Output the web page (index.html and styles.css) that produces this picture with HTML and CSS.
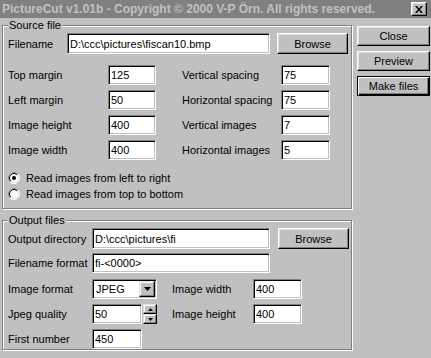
FILE: index.html
```html
<!DOCTYPE html>
<html lang="en">
<head>
    <meta charset="UTF-8">
    <title>PictureCut</title>
    <link rel="stylesheet" href="styles.css">
</head>
<body>
    <div class="titlebar">
        <span class="title">PictureCut v1.01b - Copyright © 2000 V-P Örn. All rights reserved.</span>
        <button class="title-close" aria-label="Close">
            <svg width="8" height="7" viewBox="0 0 8 7"><path d="M0 0h2l2 2.5L6 0h2L5 3.5 8 7H6L4 4.5 2 7H0l3-3.5z" fill="#000"/></svg>
        </button>
    </div>

    <div class="client">
        <div class="groups">
            <fieldset class="group source">
                <legend>Source file</legend>
                <div class="file-row">
                    <label class="lbl" for="filename">Filename</label>
                    <input class="field file-field" id="filename" type="text" value="D:\ccc\pictures\fiscan10.bmp">
                    <button class="btn browse">Browse</button>
                </div>
                <div class="pairs">
                    <label class="lbl">Top margin</label>
                    <input class="field num" type="text" value="125">
                    <label class="lbl second">Vertical spacing</label>
                    <input class="field num" type="text" value="75">

                    <label class="lbl">Left margin</label>
                    <input class="field num" type="text" value="50">
                    <label class="lbl second">Horizontal spacing</label>
                    <input class="field num" type="text" value="75">

                    <label class="lbl">Image height</label>
                    <input class="field num" type="text" value="400">
                    <label class="lbl second">Vertical images</label>
                    <input class="field num" type="text" value="7">

                    <label class="lbl">Image width</label>
                    <input class="field num" type="text" value="400">
                    <label class="lbl second">Horizontal images</label>
                    <input class="field num" type="text" value="5">
                </div>
                <div class="radios">
                    <div class="radio">
                        <svg width="12" height="12" viewBox="0 0 12 12">
                            <circle cx="6" cy="6" r="5.5" fill="#fff" stroke="#fff"/>
                            <path d="M2.1 9.9A5.5 5.5 0 0 1 9.9 2.1" fill="none" stroke="#808080"/>
                            <circle cx="6" cy="6" r="4.5" fill="none" stroke="#dfdfdf"/>
                            <path d="M2.8 9.2A4.5 4.5 0 0 1 9.2 2.8" fill="none" stroke="#000"/>
                            <circle cx="6" cy="6" r="2" fill="#000"/>
                        </svg>
                        <span>Read images from left to right</span>
                    </div>
                    <div class="radio">
                        <svg width="12" height="12" viewBox="0 0 12 12">
                            <circle cx="6" cy="6" r="5.5" fill="#fff" stroke="#fff"/>
                            <path d="M2.1 9.9A5.5 5.5 0 0 1 9.9 2.1" fill="none" stroke="#808080"/>
                            <circle cx="6" cy="6" r="4.5" fill="none" stroke="#dfdfdf"/>
                            <path d="M2.8 9.2A4.5 4.5 0 0 1 9.2 2.8" fill="none" stroke="#000"/>
                        </svg>
                        <span>Read images from top to bottom</span>
                    </div>
                </div>
            </fieldset>

            <fieldset class="group output">
                <legend>Output files</legend>
                <div class="file-row">
                    <label class="lbl" for="outdir">Output directory</label>
                    <input class="field out-field" id="outdir" type="text" value="D:\ccc\pictures\fi">
                    <button class="btn browse">Browse</button>
                </div>
                <div class="format-row">
                    <label class="lbl" for="fmt">Filename format</label>
                    <input class="field out-field" id="fmt" type="text" value="fi-<0000>">
                </div>
                <div class="out-pairs">
                    <label class="lbl">Image format</label>
                    <div class="select">
                        <span class="select-text">JPEG</span>
                        <span class="select-arrow">
                            <svg width="7" height="4" viewBox="0 0 7 4"><path d="M0 0h7L3.5 4z" fill="#000"/></svg>
                        </span>
                    </div>
                    <label class="lbl second">Image width</label>
                    <input class="field num" type="text" value="400">

                    <label class="lbl">Jpeg quality</label>
                    <div class="spin-wrap">
                        <input class="field num" type="text" value="50">
                        <div class="spin">
                            <span class="spin-btn"><svg width="5" height="3" viewBox="0 0 5 3"><path d="M2.5 0L5 3H0z" fill="#000"/></svg></span>
                            <span class="spin-btn"><svg width="5" height="3" viewBox="0 0 5 3"><path d="M0 0h5L2.5 3z" fill="#000"/></svg></span>
                        </div>
                    </div>
                    <label class="lbl second">Image height</label>
                    <input class="field num" type="text" value="400">

                    <label class="lbl">First number</label>
                    <input class="field num" type="text" value="450">
                </div>
            </fieldset>
        </div>

        <div class="buttons">
            <button class="btn side">Close</button>
            <button class="btn side">Preview</button>
            <button class="btn side default">Make files</button>
        </div>
    </div>
</body>
</html>
```

FILE: styles.css
```css
body {
    margin: 0;
    width: 431px;
    height: 358px;
    overflow: hidden;
    background: #c0c0c0;
    font-family: "Liberation Sans", Arial, sans-serif;
    font-size: 11px;
    color: #000;
}
.titlebar {
    height: 18px;
    background: #808080;
    display: flex;
    align-items: center;
    padding-left: 2px;
}
.title {
    font-weight: bold;
    font-size: 12px;
    color: #c0c0c0;
    white-space: nowrap;
}
.title-close {
    margin-left: auto;
    margin-right: 4px;
    width: 16px;
    height: 14px;
    padding: 0;
    display: flex;
    align-items: center;
    justify-content: center;
    background: #c0c0c0;
    border: 1px solid;
    border-color: #fff #000 #000 #fff;
    box-shadow: inset -1px -1px #808080, inset 1px 1px #dfdfdf;
}
.client {
    display: flex;
    padding-left: 2px;
}
.groups {
    width: 350px;
}
.group {
    box-sizing: border-box;
    width: 350px;
    margin: 1px 0 0;
    border: 1px solid #808080;
    box-shadow: inset 1px 1px #fff, 1px 1px #fff;
    padding: 2px 0 6px 5px;
    min-width: 0;
}
.group legend {
    padding: 0 1px;
    line-height: 12px;
    background: #c0c0c0;
}
.group.output {
    margin-top: 5px;
    padding-bottom: 0;
}
.lbl {
    white-space: nowrap;
    display: flex;
    align-items: center;
}
.field {
    box-sizing: border-box;
    height: 20px;
    margin: 0;
    padding: 0 0 0 2px;
    font-family: "Liberation Sans", Arial, sans-serif;
    font-size: 11px;
    color: #000;
    background: #fff;
    border: 1px solid;
    border-color: #808080 #fff #fff #808080;
    box-shadow: inset 1px 1px #000, inset -1px -1px #c0c0c0;
    outline: none;
}
.btn {
    box-sizing: border-box;
    height: 21px;
    padding: 0;
    font-family: "Liberation Sans", Arial, sans-serif;
    font-size: 11px;
    color: #000;
    background: #c0c0c0;
    border: 1px solid;
    border-color: #fff #000 #000 #fff;
    box-shadow: inset -1px -1px #808080, inset 1px 1px #dfdfdf;
}
.file-row {
    display: flex;
    align-items: center;
    height: 21px;
}
.file-row .lbl {
    width: 59px;
}
.file-row .field {
    height: 21px;
}
.file-field {
    width: 203px;
}
.file-row .browse {
    width: 71px;
    margin-left: 7px;
}
.pairs {
    display: grid;
    grid-template-columns: 100px 48px 125px 49px;
    grid-auto-rows: 20px;
    row-gap: 5px;
    margin-top: 11px;
}
.lbl.second {
    padding-left: 26px;
}
.radios {
    margin-top: 10px;
}
.radio {
    display: flex;
    align-items: center;
    gap: 6px;
    height: 16px;
}
.output .file-row .lbl,
.format-row .lbl {
    width: 84px;
}
.out-field {
    width: 178px;
}
.output .file-row .browse {
    margin-left: 8px;
}
.format-row {
    display: flex;
    height: 20px;
    margin-top: 4px;
}
.out-pairs {
    display: grid;
    grid-template-columns: 84px 65px 96px 49px;
    grid-auto-rows: 20px;
    row-gap: 5px;
    margin-top: 6px;
}
.out-pairs .lbl.second {
    padding-left: 15px;
}
.out-pairs .num {
    width: 50px;
}
.out-pairs .num:nth-child(4),
.out-pairs .num:nth-child(8) {
    width: 49px;
}
.select {
    box-sizing: border-box;
    display: flex;
    height: 20px;
    background: #fff;
    border: 1px solid;
    border-color: #808080 #fff #fff #808080;
    box-shadow: inset 1px 1px #000, inset -1px -1px #c0c0c0;
    padding: 1px;
}
.select-text {
    flex: 1;
    padding-left: 2px;
    display: flex;
    align-items: center;
}
.select-arrow {
    box-sizing: border-box;
    width: 16px;
    height: 16px;
    display: flex;
    align-items: center;
    justify-content: center;
    background: #c0c0c0;
    border: 1px solid;
    border-color: #dfdfdf #000 #000 #dfdfdf;
    box-shadow: inset -1px -1px #808080, inset 1px 1px #fff;
}
.spin-wrap {
    display: flex;
}
.spin {
    display: flex;
    flex-direction: column;
    margin-left: 1px;
}
.spin-btn {
    box-sizing: border-box;
    width: 14px;
    height: 10px;
    display: flex;
    align-items: center;
    justify-content: center;
    background: #c0c0c0;
    border: 1px solid;
    border-color: #dfdfdf #000 #000 #dfdfdf;
    box-shadow: inset -1px -1px #808080, inset 1px 1px #fff;
}
.buttons {
    display: flex;
    flex-direction: column;
    gap: 5px;
    margin-left: 5px;
    padding-top: 8px;
}
.btn.side {
    width: 73px;
    height: 20px;
}
.btn.default {
    border-color: #000;
    box-shadow: inset 1px 1px #fff, inset -1px -1px #000, inset -2px -2px #808080;
}
```
